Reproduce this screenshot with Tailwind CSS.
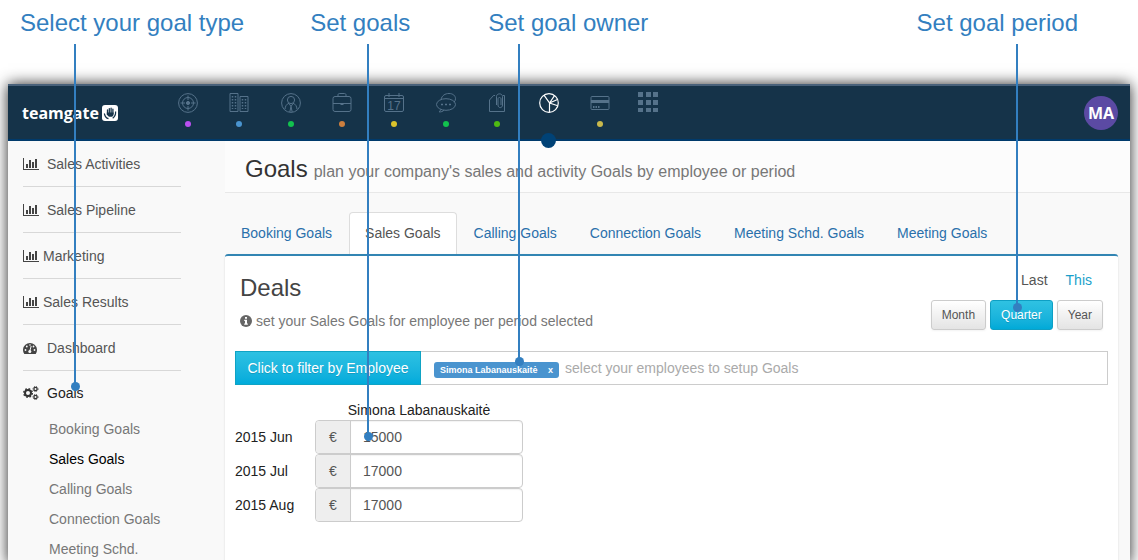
<!DOCTYPE html>
<html lang="en">
<head>
    <meta charset="UTF-8">
    <meta name="viewport" content="width=device-width, initial-scale=1.0">
    <title>Teamgate - Goals</title>
    <script src="https://cdn.jsdelivr.net/npm/@tailwindcss/browser@4"></script>
</head>
<body class="bg-white font-['Liberation_Sans',Arial,sans-serif] text-sm text-[#555]">
    <div class="relative flex min-h-screen flex-col overflow-hidden">

        <!-- Callout labels -->
        <div class="flex h-[84px] shrink-0 items-start pt-2 pr-[60px] pl-5 text-2xl leading-[30px] text-[#337fc0]">
            <p>Select your goal type</p>
            <p class="ml-[66px]">Set goals</p>
            <p class="ml-[78px]">Set goal owner</p>
            <p class="ml-auto">Set goal period</p>
        </div>

        <div class="mx-2 flex grow flex-col bg-[#f9f9f9] shadow-[0_0_14px_rgba(0,0,0,0.85)]">

            <!-- Top navigation -->
            <header class="flex h-[57px] shrink-0 border-t-2 border-b-2 border-t-[#48617a] border-b-[#003a6b] bg-[#153349] pr-3 pl-[14px]">
                <a href="#" class="flex w-[140px] items-center gap-[3px] font-['Open_Sans',sans-serif] text-base font-bold text-white">
                    teamgate
                    <svg class="size-4" viewBox="0 0 16 16">
                        <rect width="16" height="16" rx="3" fill="#fff"/>
                        <path d="M5.5 8.500V5M7.300 8V3.600M9.100 8V3.200M10.900 8.400V4.200" stroke="#153349" stroke-width="1.300" stroke-linecap="round"/>
                        <path d="M4.800 7.500h6.800v1.700c0 1.700-1.200 2.600-3 2.600-1.900 0-3-1-3.800-2.600z" fill="#153349"/>
                        <path d="M2.300 8.500c.6 2.800 1.800 4.500 4.200 5.200M13.600 6.500c.2 2.900-.8 5.200-2.900 6.700" fill="none" stroke="#153349" stroke-width="1.200"/>
                    </svg>
                </a>
                <nav class="flex text-[#55728a]">
                    <div class="grid w-[464px] grid-cols-9">
                        <a href="#" aria-label="Leads" class="flex flex-col items-center gap-2 pt-[7px]">
                            <svg class="size-5" viewBox="0 0 20 20" fill="none" stroke="currentColor">
                                <circle cx="10" cy="10" r="9.400"/><circle cx="10" cy="10" r="5.500"/>
                                <circle cx="10" cy="10" r="1.600" fill="currentColor"/>
                                <path d="M10 2.500v4.500M10 13v4.500M2.500 10h4.500M13 10h4.500"/>
                            </svg>
                            <span class="size-[6px] rounded-full bg-[#b94ff0]"></span>
                        </a>
                        <a href="#" aria-label="Companies" class="flex flex-col items-center gap-2 pt-[7px]">
                            <svg class="size-5" viewBox="0 0 20 20" fill="none" stroke="currentColor">
                                <path d="M1 .5h8v18H1zM11 3.500h8v15h-8z"/>
                                <path d="M3.500 3v13M6.500 3v13M13.500 6v10M16.500 6v10" stroke-width="1.500" stroke-dasharray="1.500 1.500"/>
                            </svg>
                            <span class="size-[6px] rounded-full bg-[#4a94cf]"></span>
                        </a>
                        <a href="#" aria-label="People" class="flex flex-col items-center gap-2 pt-[7px]">
                            <svg class="size-5" viewBox="0 0 20 20" fill="none" stroke="currentColor">
                                <circle cx="10" cy="10" r="9.400"/><circle cx="10" cy="7" r="3.600"/>
                                <path d="M8 10.200c-2.500 1-3.800 3-4 6M12 10.200c2.500 1 3.800 3 4 6M8 10.500l2 3 2-3M10 13.500l-1.200 5.500M10 13.500l1.200 5.500"/>
                            </svg>
                            <span class="size-[6px] rounded-full bg-[#12c24e]"></span>
                        </a>
                        <a href="#" aria-label="Deals" class="flex flex-col items-center gap-2 pt-[7px]">
                            <svg class="size-5" viewBox="0 0 20 20" fill="none" stroke="currentColor">
                                <rect x="1" y="3.500" width="18" height="15" rx="2"/>
                                <path d="M6 3.500V2c0-1 .5-1.500 1.500-1.500h5c1 0 1.500.5 1.500 1.500v1.500M1 10.500h18M8.500 11.500h3"/>
                            </svg>
                            <span class="size-[6px] rounded-full bg-[#cd7f3e]"></span>
                        </a>
                        <a href="#" aria-label="Calendar" class="flex flex-col items-center gap-2 pt-[7px]">
                            <svg class="size-5" viewBox="0 0 20 20" fill="none" stroke="currentColor">
                                <rect x=".5" y="2.500" width="19" height="16" rx="1.500"/>
                                <path d="M.5 5.500h19M5 0v4M15 0v4"/>
                                <text x="10" y="16.500" text-anchor="middle" font-size="12" fill="currentColor" stroke="none">17</text>
                            </svg>
                            <span class="size-[6px] rounded-full bg-[#dbc32c]"></span>
                        </a>
                        <a href="#" aria-label="Messages" class="flex flex-col items-center gap-2 pt-[7px]">
                            <svg class="size-5" viewBox="0 0 20 20" fill="none" stroke="currentColor">
                                <ellipse cx="10" cy="11.500" rx="9.500" ry="5.800"/>
                                <path d="M5 6.500C6 2.500 9 .5 13 .5c4 0 6.500 2.300 6.500 5.200 0 1.500-.6 2.700-1.500 3.500M4.500 16.500c0 1-.5 1.800-1.200 2.500 2 0 3.500-.6 4.700-1.800"/>
                                <path d="M5 11.500h2M9 11.500h2M13 11.500h2" stroke-width="1.500"/>
                            </svg>
                            <span class="size-[6px] rounded-full bg-[#12c24e]"></span>
                        </a>
                        <a href="#" aria-label="Files" class="flex flex-col items-center gap-2 pt-[7px]">
                            <svg class="size-5" viewBox="0 0 20 20" fill="none" stroke="currentColor">
                                <path d="M8 2.500H6.500L2.500 7v11.500h15v-16H16"/>
                                <path d="M9.500 12V3.500c0-3.500 6-3.500 6 0V12c0 3.500-4.500 3.500-4.500 0V6c0-2 3-2 3 0v6"/>
                            </svg>
                            <span class="size-[6px] rounded-full bg-[#4fba12]"></span>
                        </a>
                        <a href="#" aria-label="Insights" class="relative flex flex-col items-center pt-[7px] text-white">
                            <svg class="size-5" viewBox="0 0 20 20" fill="none" stroke="currentColor" stroke-width="1.200">
                                <circle cx="10" cy="10" r="9.300"/>
                                <path d="M10.500 19.300V10L5 2.200M10.500 10l5-7.300M10.500 10l8-3.500M10.500 10l8.300 2.800"/>
                            </svg>
                            <!-- marker of the open section, hangs over the bar's edge -->
                            <span class="absolute -bottom-[9px] size-[15px] rounded-full bg-[#004276]"></span>
                        </a>
                        <a href="#" aria-label="Billing" class="flex flex-col items-center gap-2 pt-[7px]">
                            <svg class="size-5" viewBox="0 0 20 20" fill="none" stroke="currentColor">
                                <rect x="1" y="3.500" width="18" height="13" rx="1"/>
                                <path d="M1 8.500h18" stroke-width="3"/>
                                <path d="M3 14h1.500M5.500 14H7M8 14h1.500" stroke-width="2"/>
                            </svg>
                            <span class="size-[6px] rounded-full bg-[#c9b94c]"></span>
                        </a>
                    </div>
                    <a href="#" aria-label="Apps" class="flex w-11 justify-center pt-[6px]">
                        <svg class="h-5 w-[22px]" viewBox="0 0 22 20" fill="currentColor">
                            <path d="M1 0h5v5H1zM9 0h5v5H9zM16 0h5v5h-5zM1 8h5v5H1zM9 8h5v5H9zM16 8h5v5h-5zM1 16h5v4H1zM9 16h5v4H9zM16 16h5v4h-5z"/>
                        </svg>
                    </a>
                </nav>
                <button type="button" class="ml-auto size-[34px] self-center rounded-full bg-[#5b4aa3] font-['Open_Sans',sans-serif] text-base font-bold text-white">MA</button>
            </header>

            <div class="flex grow">
                <!-- Sidebar -->
                <aside class="w-[217px] shrink-0 pr-11 pl-[15px]">
                    <svg class="hidden">
                        <symbol id="chart" viewBox="0 0 16 12">
                            <path d="M0 0h1v11h15v1H0z"/>
                            <path d="M3 6h2v4H3zM6 2h2v8H6zM9 4h2v6H9zM12 1h2v9h-2z"/>
                        </symbol>
                    </svg>
                    <a href="#" class="flex h-[46px] items-center gap-2 border-b border-[#d8d8d8]">
                        <svg class="h-3 w-4 fill-[#444]"><use href="#chart"/></svg>Sales Activities
                    </a>
                    <a href="#" class="flex h-[46px] items-center gap-2 border-b border-[#d8d8d8]">
                        <svg class="h-3 w-4 fill-[#444]"><use href="#chart"/></svg>Sales Pipeline
                    </a>
                    <a href="#" class="flex h-[46px] items-center gap-1 border-b border-[#d8d8d8]">
                        <svg class="h-3 w-4 fill-[#444]"><use href="#chart"/></svg>Marketing
                    </a>
                    <a href="#" class="flex h-[46px] items-center gap-1 border-b border-[#d8d8d8]">
                        <svg class="h-3 w-4 fill-[#444]"><use href="#chart"/></svg>Sales Results
                    </a>
                    <a href="#" class="flex h-[46px] items-center gap-2 border-b border-[#d8d8d8]">
                        <svg class="h-3 w-4" viewBox="0 0 16 12">
                            <path d="M1.300 12A7 7 0 1 1 12.700 12z" fill="#444"/>
                            <path d="M6.800 9l1.400-5" stroke="#f9f9f9"/>
                            <g fill="#f9f9f9"><circle cx="6.800" cy="9.500" r="1.500"/><circle cx="2.500" cy="8" r=".9"/><circle cx="3.800" cy="4.500" r=".9"/><circle cx="7" cy="3" r=".8"/><circle cx="10.500" cy="4.500" r=".9"/><circle cx="11.500" cy="8" r=".9"/></g>
                        </svg>Dashboard
                    </a>
                    <a href="#" class="flex h-[43px] items-center gap-2 text-[#222]">
                        <svg class="h-[14px] w-4" viewBox="0 0 16 14" fill="none" stroke="#333">
                            <circle cx="5" cy="7" r="3" stroke-width="2"/>
                            <circle cx="5" cy="7" r="4.300" stroke-width="1.400" stroke-dasharray="1.690 1.690"/>
                            <circle cx="12.500" cy="3" r="1.600" stroke-width="1.200"/>
                            <circle cx="12.500" cy="3" r="2.500" stroke-dasharray="1 1"/>
                            <circle cx="12.500" cy="11" r="1.600" stroke-width="1.200"/>
                            <circle cx="12.500" cy="11" r="2.500" stroke-dasharray="1 1"/>
                        </svg>Goals
                    </a>
                    <ul class="pl-[26px] leading-[30px] text-[#777]">
                        <li><a href="#">Booking Goals</a></li>
                        <li><a href="#" class="text-black">Sales Goals</a></li>
                        <li><a href="#">Calling Goals</a></li>
                        <li><a href="#">Connection Goals</a></li>
                        <li><a href="#">Meeting Schd.</a></li>
                    </ul>
                </aside>

                <main class="flex min-w-0 grow flex-col">
                    <div class="flex h-[52px] shrink-0 items-baseline gap-[6px] border-b border-[#e8e8e8] bg-[#fcfcfc] pt-3 pl-5">
                        <h1 class="text-2xl text-[#333]">Goals</h1>
                        <p class="text-base text-[#777]">plan your company's sales and activity Goals by employee or period</p>
                    </div>

                    <!-- Tabs -->
                    <nav class="mt-[19px] mr-3 flex gap-px text-[#2a70ab]">
                        <a href="#" class="border border-transparent px-[15px] py-[10px]">Booking Goals</a>
                        <a href="#" class="rounded-t border border-b-0 border-[#ddd] bg-white px-[15px] py-[10px] text-[#555]">Sales Goals</a>
                        <a href="#" class="border border-transparent px-[15px] py-[10px]">Calling Goals</a>
                        <a href="#" class="border border-transparent px-[15px] py-[10px]">Connection Goals</a>
                        <a href="#" class="border border-transparent px-[15px] py-[10px]">Meeting Schd. Goals</a>
                        <a href="#" class="border border-transparent px-[15px] py-[10px]">Meeting Goals</a>
                    </nav>

                    <section class="mr-3 grow rounded-t-[3px] border-t-2 border-[#3285b3] bg-white px-[10px] shadow-[0_1px_2px_rgba(0,0,0,0.15)]">
                        <div class="flex justify-between px-[5px] pt-[14px]">
                            <div>
                                <h2 class="text-2xl leading-9 text-[#444]">Deals</h2>
                                <p class="mt-[5px] flex items-center gap-1 text-[#777]">
                                    <svg class="size-3" viewBox="0 0 12 12">
                                        <circle cx="6" cy="6" r="6" fill="#666"/>
                                        <path d="M5 2h2v1.700H5zM4.200 4.800H7v3.700h.8v1.200H4.200V8.500H5V6h-.8z" fill="#fff"/>
                                    </svg>
                                    set your Sales Goals for employee per period selected
                                </p>
                            </div>
                            <div>
                                <div class="flex justify-end gap-[18px] pr-[11px]">
                                    <a href="#">Last</a>
                                    <a href="#" class="text-[#1a9fca]">This</a>
                                </div>
                                <div class="mt-[10px] flex gap-1 text-xs">
                                    <button type="button" class="h-[30px] rounded-[3px] border border-[#ccc] bg-linear-to-b from-white to-[#e4e4e4] px-[10px] shadow-xs">Month</button>
                                    <button type="button" class="h-[30px] rounded-[3px] border border-[#0e9fc4] bg-linear-to-b from-[#2fc2e2] to-[#00aad8] px-[10px] text-white text-shadow-2xs">Quarter</button>
                                    <button type="button" class="h-[30px] rounded-[3px] border border-[#ccc] bg-linear-to-b from-white to-[#e4e4e4] px-[10px] shadow-xs">Year</button>
                                </div>
                            </div>
                        </div>

                        <!-- Employee filter -->
                        <div class="mt-5 flex h-[34px]">
                            <button type="button" class="w-[186px] shrink-0 border border-[#0fa3c4] bg-linear-to-b from-[#2cc1e2] to-[#00abdb] text-white text-shadow-2xs">Click to filter by Employee</button>
                            <div class="flex grow items-center border border-l-0 border-[#ccc] pl-[13px]">
                                <span class="mt-1 flex h-4 w-[125px] shrink-0 items-center justify-between rounded-[3px] bg-[#4a94cf] px-[6px] text-[9px] font-bold text-white">
                                    Simona Labanauskaitė
                                    <button type="button" aria-label="Remove Simona Labanauskaitė">x</button>
                                </span>
                                <input type="text" aria-label="Employees" placeholder="select your employees to setup Goals" class="min-w-0 grow px-[6px] outline-none placeholder:text-[#aaa]">
                            </div>
                        </div>

                        <!-- Goals per period -->
                        <table class="mt-[15px] w-72 table-fixed text-left text-[#222]">
                            <thead>
                                <tr>
                                    <td class="w-20 p-0"></td>
                                    <th class="p-0 text-center font-normal">Simona Labanauskaitė</th>
                                </tr>
                            </thead>
                            <tbody>
                                <tr>
                                    <th class="p-0 font-normal"><label for="jun">2015 Jun</label></th>
                                    <td class="p-0">
                                        <div class="flex h-[34px] rounded border border-[#ccc] text-[#555]">
                                            <span class="flex w-[35px] shrink-0 items-center justify-center rounded-l border-r border-[#ccc] bg-[#eee]">€</span>
                                            <input id="jun" type="text" value="15000" class="min-w-0 grow rounded-r px-3 inset-shadow-xs outline-none">
                                        </div>
                                    </td>
                                </tr>
                                <tr>
                                    <th class="p-0 font-normal"><label for="jul">2015 Jul</label></th>
                                    <td class="p-0">
                                        <div class="flex h-[34px] rounded border border-[#ccc] text-[#555]">
                                            <span class="flex w-[35px] shrink-0 items-center justify-center rounded-l border-r border-[#ccc] bg-[#eee]">€</span>
                                            <input id="jul" type="text" value="17000" class="min-w-0 grow rounded-r px-3 inset-shadow-xs outline-none">
                                        </div>
                                    </td>
                                </tr>
                                <tr>
                                    <th class="p-0 font-normal"><label for="aug">2015 Aug</label></th>
                                    <td class="p-0">
                                        <div class="flex h-[34px] rounded border border-[#ccc] text-[#555]">
                                            <span class="flex w-[35px] shrink-0 items-center justify-center rounded-l border-r border-[#ccc] bg-[#eee]">€</span>
                                            <input id="aug" type="text" value="17000" class="min-w-0 grow rounded-r px-3 inset-shadow-xs outline-none">
                                        </div>
                                    </td>
                                </tr>
                            </tbody>
                        </table>
                    </section>
                </main>
            </div>
        </div>

        <!-- Callout lines -->
        <div class="pointer-events-none absolute top-11 left-[74px] flex h-[347px] w-[2px] items-end justify-center bg-[#337fc0]">
            <span class="size-[9px] shrink-0 rounded-full bg-[#337fc0]"></span>
        </div>
        <div class="pointer-events-none absolute top-11 left-[367px] flex h-[397px] w-[2px] items-end justify-center bg-[#337fc0]">
            <span class="size-[9px] shrink-0 rounded-full bg-[#337fc0]"></span>
        </div>
        <div class="pointer-events-none absolute top-11 left-[518px] flex h-[322px] w-[2px] items-end justify-center bg-[#337fc0]">
            <span class="size-[9px] shrink-0 rounded-full bg-[#337fc0]"></span>
        </div>
        <div class="pointer-events-none absolute top-11 right-[120px] flex h-[268px] w-[2px] items-end justify-center bg-[#337fc0]">
            <span class="size-[9px] shrink-0 rounded-full bg-[#337fc0]"></span>
        </div>
    </div>
</body>
</html>
